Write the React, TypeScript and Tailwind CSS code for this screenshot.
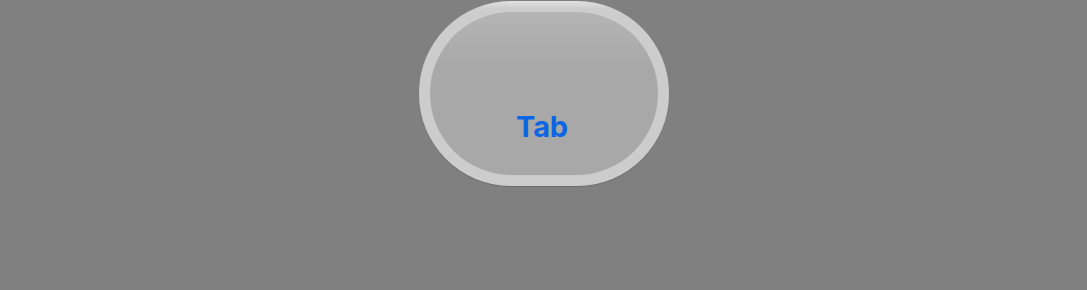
import React from 'react';

export default function App() {
  return (
    <div className="w-full h-[290px] bg-[#808080] flex justify-center pt-px" style={{ fontFamily: 'Inter, "Noto Sans", sans-serif' }}>
      <div className="w-[250px] h-[185px] rounded-[92px] bg-gradient-to-b from-[#e2e2e2] via-[#cdcdcd] via-[4%] to-[#cccccc] p-[11px] shadow-[0_1px_1px_rgba(0,0,0,0.15)]">
        <div className="w-full h-full rounded-[82px] bg-gradient-to-b from-[#b4b4b4] to-[#a8a8a8] to-[35%] flex flex-col items-center justify-end pb-[34px]">
          <span className="text-[29px] font-bold text-[#0a66e4] leading-none tracking-[-0.2px] pr-[3px]">Tab</span>
        </div>
      </div>
    </div>
  );
}
